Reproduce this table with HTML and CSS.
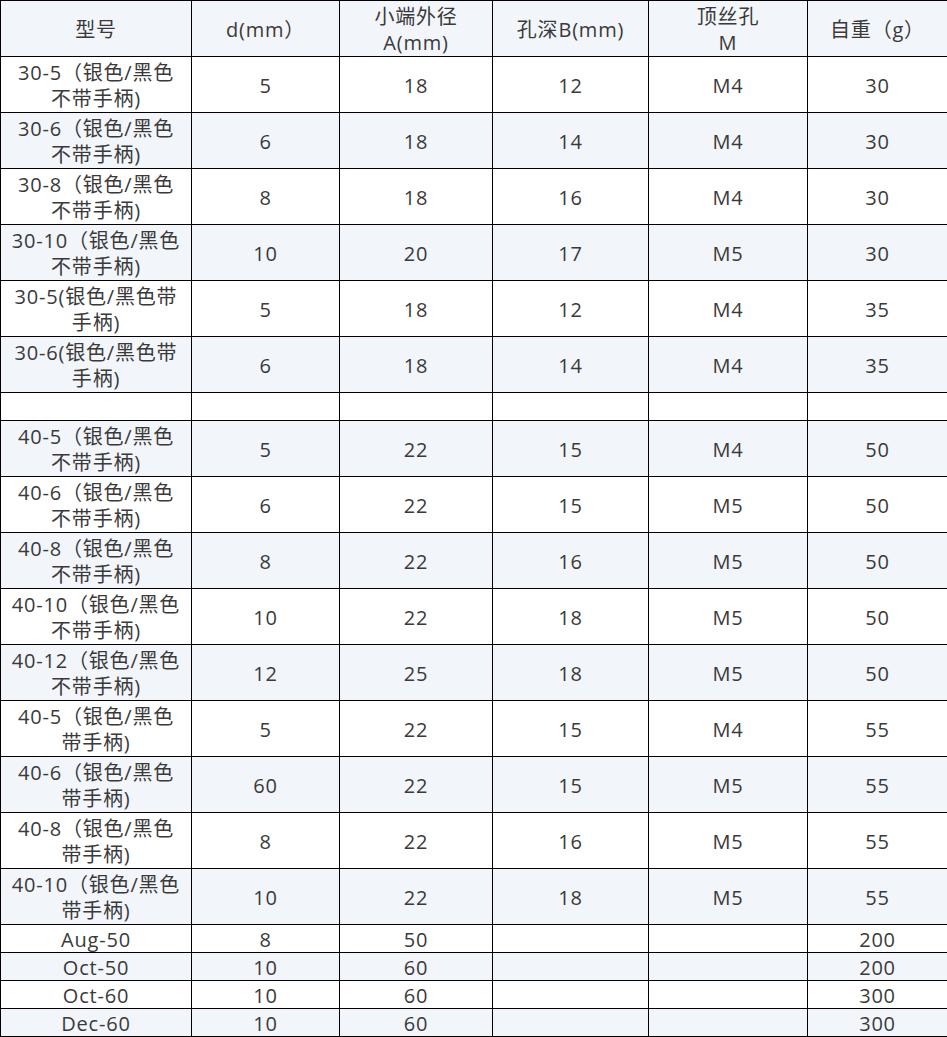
FILE: index.html
```html
<!DOCTYPE html>
<html lang="zh">
<head>
<meta charset="utf-8">
<link rel="stylesheet" href="styles.css">
</head>
<body>
<table class="spec">
<colgroup>
<col class="c1"><col class="c2"><col class="c3"><col class="c4"><col class="c5"><col class="c6">
</colgroup>
<thead>
<tr class="tall"><th>型号</th><th>d(mm）</th><th>小端外径<br>A(mm)</th><th>孔深B(mm)</th><th>顶丝孔<br>M</th><th>自重（g）</th></tr>
</thead>
<tbody>
<tr class="tall"><td>30-5（银色/黑色<br>不带手柄)</td><td>5</td><td>18</td><td>12</td><td>M4</td><td>30</td></tr>
<tr class="tall"><td>30-6（银色/黑色<br>不带手柄)</td><td>6</td><td>18</td><td>14</td><td>M4</td><td>30</td></tr>
<tr class="tall"><td>30-8（银色/黑色<br>不带手柄)</td><td>8</td><td>18</td><td>16</td><td>M4</td><td>30</td></tr>
<tr class="tall"><td>30-10（银色/黑色<br>不带手柄)</td><td>10</td><td>20</td><td>17</td><td>M5</td><td>30</td></tr>
<tr class="tall"><td>30-5(银色/黑色带<br>手柄)</td><td>5</td><td>18</td><td>12</td><td>M4</td><td>35</td></tr>
<tr class="tall"><td>30-6(银色/黑色带<br>手柄)</td><td>6</td><td>18</td><td>14</td><td>M4</td><td>35</td></tr>
<tr class="short"><td></td><td></td><td></td><td></td><td></td><td></td></tr>
<tr class="tall"><td>40-5（银色/黑色<br>不带手柄)</td><td>5</td><td>22</td><td>15</td><td>M4</td><td>50</td></tr>
<tr class="tall"><td>40-6（银色/黑色<br>不带手柄)</td><td>6</td><td>22</td><td>15</td><td>M5</td><td>50</td></tr>
<tr class="tall"><td>40-8（银色/黑色<br>不带手柄)</td><td>8</td><td>22</td><td>16</td><td>M5</td><td>50</td></tr>
<tr class="tall"><td>40-10（银色/黑色<br>不带手柄)</td><td>10</td><td>22</td><td>18</td><td>M5</td><td>50</td></tr>
<tr class="tall"><td>40-12（银色/黑色<br>不带手柄)</td><td>12</td><td>25</td><td>18</td><td>M5</td><td>50</td></tr>
<tr class="tall"><td>40-5（银色/黑色<br>带手柄)</td><td>5</td><td>22</td><td>15</td><td>M4</td><td>55</td></tr>
<tr class="tall"><td>40-6（银色/黑色<br>带手柄)</td><td>60</td><td>22</td><td>15</td><td>M5</td><td>55</td></tr>
<tr class="tall"><td>40-8（银色/黑色<br>带手柄)</td><td>8</td><td>22</td><td>16</td><td>M5</td><td>55</td></tr>
<tr class="tall"><td>40-10（银色/黑色<br>带手柄)</td><td>10</td><td>22</td><td>18</td><td>M5</td><td>55</td></tr>
<tr class="short"><td>Aug-50</td><td>8</td><td>50</td><td></td><td></td><td>200</td></tr>
<tr class="short"><td>Oct-50</td><td>10</td><td>60</td><td></td><td></td><td>200</td></tr>
<tr class="short"><td>Oct-60</td><td>10</td><td>60</td><td></td><td></td><td>300</td></tr>
<tr class="short"><td>Dec-60</td><td>10</td><td>60</td><td></td><td></td><td>300</td></tr>
</tbody>
</table>
</body>
</html>
```
FILE: styles.css
```css
html, body {
  margin: 0;
  padding: 0;
  background: #ffffff;
}
.spec {
  border-collapse: collapse;
  table-layout: fixed;
  width: 947px;
  font-family: "Open Sans", "Noto Sans CJK SC", sans-serif;
  font-size: 20px;
  letter-spacing: 0.8px;
  color: #3a3a3a;
}
.c1 { width: 191px; }
.c2 { width: 148px; }
.c3 { width: 153px; }
.c4 { width: 156px; }
.c5 { width: 159px; }
.c6 { width: 140px; }
.spec th, .spec td {
  border: 1px solid #000000;
  padding: 2px 0 0 0;
  text-align: center;
  vertical-align: middle;
  font-weight: normal;
  line-height: 26px;
  overflow: hidden;
  white-space: nowrap;
}
.spec thead tr { background: #f2f5f9; }
.spec tbody tr:nth-child(even) { background: #f2f5f9; }
.tall th, .tall td { height: 53px; }
.short td { height: 25px; line-height: 24px; }
```
